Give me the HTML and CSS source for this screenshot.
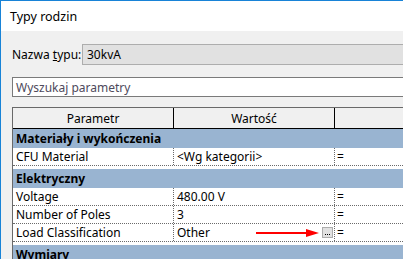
FILE: index.html
```html
<!DOCTYPE html>
<html>
<head>
<meta charset="utf-8">
<link rel="stylesheet" href="styles.css">
</head>
<body>
<div class="window">
  <div class="titlebar">Typy rodzin</div>
  <div class="content">
    <div class="name-row">
      <span class="name-label">Nazwa <u>t</u>ypu:</span>
      <div class="name-input">30kvA</div>
    </div>
    <div class="search">Wyszukaj parametry</div>
    <div class="table">
      <div class="head">
        <div class="hcell">Parametr</div>
        <div class="hcell">Wartość</div>
        <div class="hcell last"></div>
      </div>
      <div class="group">
        <div class="ghead">Materiały i wykończenia</div>
        <div class="row"><div class="cell">CFU Material</div><div class="cell">&lt;Wg kategorii&gt;</div><div class="cell last">=</div></div>
      </div>
      <div class="group">
        <div class="ghead">Elektryczny</div>
        <div class="row"><div class="cell">Voltage</div><div class="cell">480.00 V</div><div class="cell last">=</div></div>
        <div class="row"><div class="cell">Number of Poles</div><div class="cell">3</div><div class="cell last">=</div></div>
        <div class="row"><div class="cell">Load Classification</div><div class="cell value-btn"><span>Other</span><span class="ellipsis"><i></i><i></i><i></i></span></div><div class="cell last">=</div></div>
      </div>
      <div class="group">
        <div class="ghead">Wymiary</div>
      </div>
      <svg class="arrow" width="64" height="10" viewBox="0 0 64 10">
        <line x1="0" y1="5" x2="52" y2="5" stroke="#ff0000" stroke-width="2"/>
        <polygon points="50,1 63,5 50,9" fill="#ff0000"/>
      </svg>
    </div>
  </div>
</div>
</body>
</html>
```

FILE: styles.css
```css
html, body {
  margin: 0;
  padding: 0;
}
body {
  width: 403px;
  height: 259px;
  overflow: hidden;
  font-family: "Noto Sans", "Open Sans", sans-serif;
  font-size: 12px;
  color: #000;
}
.window {
  height: 259px;
  border-top: 1px solid #1883d7;
  border-left: 1px solid #1883d7;
  box-sizing: border-box;
  display: flex;
  flex-direction: column;
  overflow: hidden;
}
.titlebar {
  height: 30px;
  flex: none;
  background: #fff;
  display: flex;
  align-items: center;
  padding-left: 9px;
  font-size: 12.5px;
}
.content {
  flex: 1;
  background: #f0f0f0;
  padding: 13px 0 0 11px;
  display: flex;
  flex-direction: column;
}
.name-row {
  display: flex;
  align-items: center;
  height: 21px;
}
.name-label {
  width: 70px;
  flex: none;
}
.name-label u {
  text-decoration: underline;
}
.name-input {
  flex: 1;
  box-sizing: border-box;
  height: 21px;
  border: 1px solid #adadad;
  border-right: none;
  background: #e1e1e1;
  padding-left: 4px;
  display: flex;
  align-items: center;
}
.search {
  margin-top: 12px;
  height: 20px;
  box-sizing: border-box;
  border: 1px solid #7a7a7a;
  border-right: none;
  background: #fff;
  color: #4e4a5c;
  padding-left: 3px;
  display: flex;
  align-items: center;
}
.table {
  position: relative;
  margin-top: 10px;
  border-top: 1px solid #696969;
  border-left: 1px solid #696969;
  background: #fff;
  flex: 1;
}
.head, .row {
  display: grid;
  grid-template-columns: 161px 161px 1fr;
}
.head {
  height: 21px;
  box-sizing: border-box;
  background: #f0f0f0;
  border-bottom: 1px solid #000;
}
.hcell {
  border-right: 1px solid #000;
  display: flex;
  align-items: center;
  justify-content: center;
}
.hcell.last {
  border-right: none;
}
.group {
  padding-bottom: 3px;
}
.ghead {
  height: 19px;
  background: #99b4d1;
  font-weight: bold;
  padding-left: 3px;
  display: flex;
  align-items: center;
}
.row {
  height: 18px;
  box-sizing: border-box;
  border-bottom: 1px dotted #6a6a6a;
}
.cell {
  border-right: 1px dotted #6a6a6a;
  padding-left: 3px;
  display: flex;
  align-items: center;
  white-space: nowrap;
  overflow: hidden;
}
.cell.last {
  border-right: none;
  padding-left: 2px;
}
.value-btn {
  justify-content: space-between;
  padding-right: 1px;
}
.ellipsis {
  width: 11px;
  height: 11px;
  box-sizing: border-box;
  border: 1px solid #adadad;
  background: #e1e1e1;
  display: flex;
  align-items: flex-end;
  justify-content: center;
  gap: 1px;
  padding-bottom: 2px;
}
.ellipsis i {
  display: block;
  width: 1px;
  height: 1px;
  background: #000;
}
.arrow {
  position: absolute;
  left: 243px;
  top: 120px;
}
```
